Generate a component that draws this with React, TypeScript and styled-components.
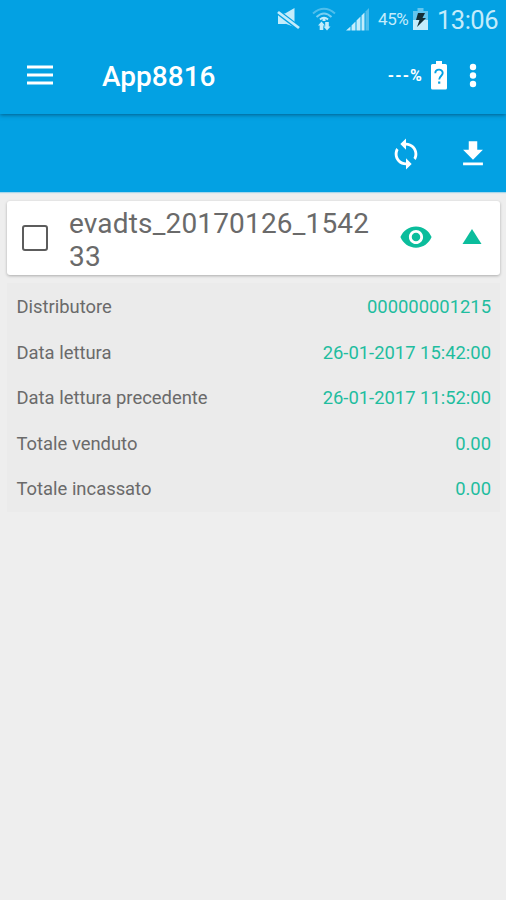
import React from 'react';
import styled, { createGlobalStyle } from 'styled-components';

const BLUE = '#03a1e3';
const GREEN = '#0bbd9c';

const GlobalStyle = createGlobalStyle`
  * { box-sizing: border-box; }
  body { margin: 0; background: #eeeeee; font-family: Roboto, "Liberation Sans", sans-serif; }
`;

const Screen = styled.div`
  width: 506px;
  height: 900px;
  display: flex;
  flex-direction: column;
  overflow: hidden;
  background: #eeeeee;
`;

const Header = styled.header`
  position: relative;
  z-index: 1;
  height: 114px;
  flex: none;
  background: ${BLUE};
  color: #fff;
  box-shadow: 0 1px 4px rgba(0, 50, 80, 0.6);
`;

const StatusBar = styled.div`
  height: 38px;
  display: flex;
  align-items: center;
  justify-content: flex-end;
  padding-right: 7px;
  color: #c4ecfb;
`;

const Glyph = styled.svg<{ $gap?: number }>`
  display: block;
  flex: none;
  margin-left: ${({ $gap = 0 }) => $gap}px;
`;

const BatteryLevel = styled.span`
  width: 31px;
  margin-left: 8px;
  font-size: 17px;
  line-height: 38px;
  letter-spacing: -0.4px;
  white-space: nowrap;
`;

const Clock = styled.span`
  width: 62px;
  margin-left: 9px;
  padding-top: 1px;
  font-size: 25.5px;
  line-height: 38px;
  letter-spacing: -0.5px;
  white-space: nowrap;
`;

const AppBar = styled.div`
  height: 76px;
  display: flex;
  align-items: center;
  padding: 0 29px 2px 0;
`;

const Title = styled.h1`
  flex: 1;
  margin: 0 0 0 49px;
  padding-top: 3px;
  font-size: 28px;
  font-weight: 500;
  line-height: 74px;
`;

const DeviceLevel = styled.span`
  font-size: 16px;
  font-weight: 700;
  letter-spacing: 1.1px;
`;

const ActionBar = styled.div`
  height: 78px;
  flex: none;
  display: flex;
  align-items: center;
  justify-content: flex-end;
  padding: 2px 16px 0 0;
  background: ${BLUE};
  color: #fff;
  box-shadow: 0 1px 1px rgba(3, 161, 227, 0.3);
`;

const Content = styled.main`
  padding: 9px 6px 0 7px;
`;

const FileCard = styled.section`
  height: 74px;
  display: flex;
  align-items: center;
  padding: 0 18px 0 15px;
  background: #fff;
  border-radius: 3px;
  box-shadow: 0 1px 3px rgba(0, 0, 0, 0.28);
`;

const Checkbox = styled.div`
  width: 26px;
  height: 26px;
  flex: none;
  border: 2px solid #5c5c5c;
  border-radius: 3px;
`;

const FileName = styled.div`
  flex: none;
  width: 308px;
  margin-left: 21px;
  padding-top: 3px;
  font-size: 28px;
  line-height: 33px;
  letter-spacing: 0.17px;
  color: #6a6a6a;
  overflow-wrap: anywhere;
`;

const CardActions = styled.div`
  flex: 1;
  display: flex;
  align-items: center;
  justify-content: flex-end;
  padding-bottom: 3px;
`;

const Details = styled.dl`
  margin: 8px 0 0;
  padding: 1px 9px 0 9.5px;
  background: #ebebeb;
`;

const DetailRow = styled.div`
  height: 45.5px;
  display: flex;
  align-items: center;
  justify-content: space-between;
`;

const Label = styled.dt`
  font-size: 18.4px;
  color: #6a6a6a;
`;

const Value = styled.dd`
  margin: 0;
  font-size: 18.4px;
  color: #1fbd9f;
`;

const rows = [
  ['Distributore', '000000001215'],
  ['Data lettura', '26-01-2017 15:42:00'],
  ['Data lettura precedente', '26-01-2017 11:52:00'],
  ['Totale venduto', '0.00'],
  ['Totale incassato', '0.00'],
];

const MutedIcon = () => (
  <Glyph width="24" height="22" viewBox="0 0 24 22">
    <path d="M2 5.500h7L18.500 0v19L9 15.500H2z" fill="currentColor" />
    <path d="M0 2.500l24 18.500" stroke={BLUE} strokeWidth="5.200" />
    <path d="M2 4l21 16" stroke="currentColor" strokeWidth="2.800" />
    <path d="M2 8.500v7.500h7l2-.800z" fill="currentColor" />
  </Glyph>
);

const WifiIcon = () => (
  <Glyph $gap={12} width="24" height="26" viewBox="0 0 24 26" fill="none" stroke="currentColor">
    <path d="M1 7.5Q12-2 23 7.5" strokeWidth="2" opacity=".4" />
    <path d="M4.500 11Q12 4 19.500 11" strokeWidth="2" opacity=".6" />
    <path d="M8 13.500Q12 10 16 13.500" strokeWidth="2" />
    <path d="M12 12v3" strokeWidth="3" />
    <path d="M9.500 24v-5M15 16v5" strokeWidth="3.600" />
    <path d="M6 19.500l3.500-4 3.500 4zM11.500 20.500l3.500 4 3.500-4z" fill="currentColor" stroke="none" />
  </Glyph>
);

const SignalIcon = () => (
  <Glyph $gap={10} width="24" height="24" viewBox="0 0 24 24" fill="currentColor">
    <path d="M0 23.500l4.500-4V23.500zM5.500 18.500l4-4v9h-4zM10.500 13.500l4-4v14h-4zM15.500 8.500l3-3v18h-3z" />
    <path d="M19.500 4.500L23 1v22.500h-3.500z" opacity=".4" />
  </Glyph>
);

const ChargingIcon = () => (
  <Glyph $gap={4} width="15" height="24" viewBox="0 0 15 24">
    <path d="M4.500 1h6v3H15v9H0V4h4.500z" fill="currentColor" opacity=".5" />
    <path d="M0 13h15v10H0z" fill="currentColor" />
    <path d="M5 6h7l-2.500 5H13L4 20l2.500-7H3z" fill="#142e36" />
  </Glyph>
);

const MenuIcon = () => (
  <Glyph $gap={27} width="26" height="20" viewBox="0 0 26 20">
    <path d="M0 2h26M0 10h26M0 18h26" stroke="currentColor" strokeWidth="3" />
  </Glyph>
);

const UnknownBatteryIcon = () => (
  <Glyph $gap={8} width="16" height="30" viewBox="0 0 16 30">
    <path d="M5 1h6v3h3.500Q16 4 16 5.500v22.500q0 1.500-1.500 1.500h-13Q0 29.500 0 28V5.500Q0 4 1.500 4H5z" fill="#fff" />
    <path d="M4.300 13.200c0-4.700 7.400-4.700 7.400-.2 0 2.800-3.500 3.200-3.500 6.500" fill="none" stroke={BLUE} strokeWidth="1.900" />
    <path d="M7.100 21.500h2.200v2.200H7.100z" fill={BLUE} />
  </Glyph>
);

const OverflowIcon = () => (
  <Glyph $gap={22} width="8" height="25" viewBox="0 0 8 25" fill="currentColor">
    <circle cx="4" cy="4" r="3.200" />
    <circle cx="4" cy="12.500" r="3.200" />
    <circle cx="4" cy="21" r="3.200" />
  </Glyph>
);

const SyncIcon = () => (
  <Glyph width="34" height="34" viewBox="0 0 24 24" fill="currentColor">
    <path d="M12 4V1L8 5l4 4V6c3.310 0 6 2.690 6 6 0 1.010-.250 1.970-.700 2.800l1.460 1.460C19.540 15.030 20 13.570 20 12c0-4.420-3.580-8-8-8zm0 14c-3.310 0-6-2.690-6-6 0-1.010.250-1.970.700-2.800L5.240 7.740C4.460 8.970 4 10.430 4 12c0 4.420 3.580 8 8 8v3l4-4-4-4v3z" />
  </Glyph>
);

const DownloadIcon = () => (
  <Glyph $gap={33} width="34" height="34" viewBox="0 0 24 24" fill="currentColor">
    <path d="M19 9h-4V3H9v6H5l7 7 7-7zM5 18v2h14v-2H5z" />
  </Glyph>
);

const EyeIcon = () => (
  <Glyph width="34" height="34" viewBox="0 0 24 24" fill={GREEN}>
    <path d="M12 4.500C7 4.500 2.730 7.610 1 12c1.730 4.390 6 7.500 11 7.500s9.270-3.110 11-7.500c-1.730-4.390-6-7.500-11-7.500zM12 17c-2.760 0-5-2.240-5-5s2.240-5 5-5 5 2.240 5 5-2.240 5-5 5zm0-8c-1.660 0-3 1.340-3 3s1.340 3 3 3 3-1.340 3-3-1.340-3-3-3z" />
  </Glyph>
);

const CollapseIcon = () => (
  <Glyph $gap={29} width="20" height="16" viewBox="0 0 20 16">
    <path d="M10 0l9.500 15H0.500z" fill={GREEN} />
  </Glyph>
);

export default function App() {
  return (
    <>
      <GlobalStyle />
      <Screen>
        <Header>
          <StatusBar>
            <MutedIcon />
            <WifiIcon />
            <SignalIcon />
            <BatteryLevel>45%</BatteryLevel>
            <ChargingIcon />
            <Clock>13:06</Clock>
          </StatusBar>
          <AppBar>
            <MenuIcon />
            <Title>App8816</Title>
            <DeviceLevel>---%</DeviceLevel>
            <UnknownBatteryIcon />
            <OverflowIcon />
          </AppBar>
        </Header>
        <ActionBar>
          <SyncIcon />
          <DownloadIcon />
        </ActionBar>
        <Content>
          <FileCard>
            <Checkbox role="checkbox" aria-checked="false" />
            <FileName>evadts_20170126_154233</FileName>
            <CardActions>
              <EyeIcon />
              <CollapseIcon />
            </CardActions>
          </FileCard>
          <Details>
            {rows.map(([label, value]) => (
              <DetailRow key={label}>
                <Label>{label}</Label>
                <Value>{value}</Value>
              </DetailRow>
            ))}
          </Details>
        </Content>
      </Screen>
    </>
  );
}
